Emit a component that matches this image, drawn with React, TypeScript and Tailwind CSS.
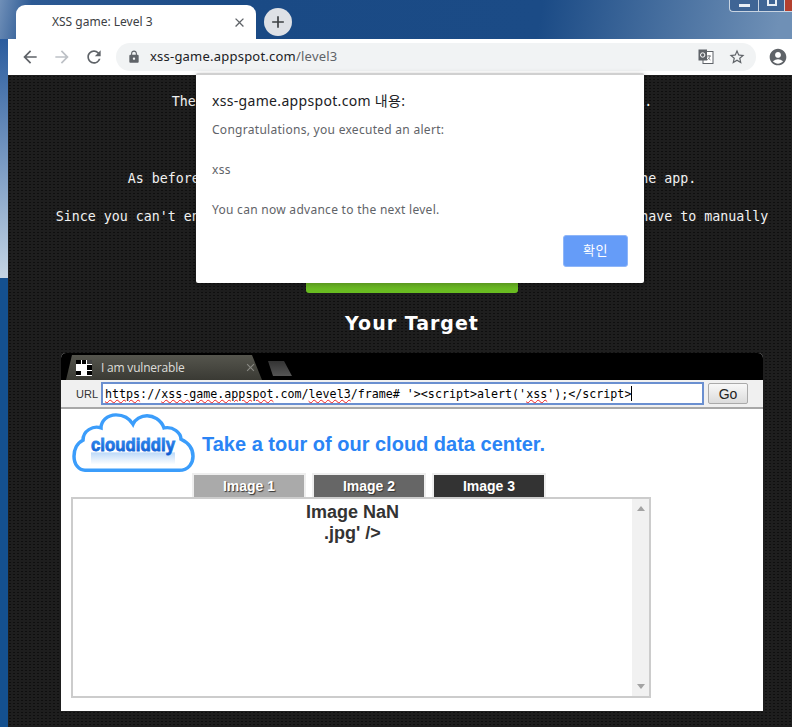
import { MdAccountCircle, MdAdd, MdArrowBack, MdArrowForward, MdClose, MdLock, MdRefresh, MdStarBorder } from "react-icons/md";

const uiFont = "font-['Noto_Sans','Noto_Sans_CJK_KR',sans-serif]";
const monoFont = "font-['DejaVu_Sans_Mono',monospace]";
const arial = "font-['Liberation_Sans',Arial,sans-serif]";

function Squiggle({ children }: { children: string }) {
  return <span className="underline decoration-wavy decoration-[#f02020] decoration-1 underline-offset-1">{children}</span>;
}

function WindowControls() {
  return (
    <div className="ml-auto flex h-[12px] self-start overflow-hidden rounded-bl-[4px] border-b border-l border-[#c8d4e2] bg-[#3f6595]">
      <div className="flex w-[29px] items-center justify-center border-r border-[#c8d4e2]">
        <div className="h-[3px] w-[11px] bg-[#e8eef5]" />
      </div>
      <div className="flex w-[26px] items-start justify-center border-r border-[#c8d4e2]">
        <div className="h-[6px] w-[10px] border-2 border-t-0 border-[#e8eef5]" />
      </div>
      <div className="w-[7px] bg-[#b3402f]" />
    </div>
  );
}

function TranslateIcon() {
  return (
    <svg width="16" height="16" viewBox="0 0 16 16">
      <rect x="5" y="2.500" width="10" height="12" fill="#fff" stroke="#5f6368" />
      <path d="M9 7h4M11 6v1M12 7c-.5 2-1.500 3-3 4M10 8.500c.5 1 1.500 2 2.500 2.500" stroke="#5f6368" fill="none" strokeWidth="0.8" />
      <rect x="0.500" y="0.500" width="8.500" height="11" fill="#5f6368" />
      <circle cx="4.700" cy="6" r="2.200" fill="none" stroke="#fff" strokeWidth="1" />
    </svg>
  );
}

function CloudLogo() {
  return (
    <svg width="124" height="62" viewBox="0 0 124 66" preserveAspectRatio="none" className="shrink-0">
      <defs>
        <linearGradient id="logoText" x1="0" y1="0" x2="0" y2="1">
          <stop offset="0" stopColor="#3d97f5" />
          <stop offset="1" stopColor="#0b58d0" />
        </linearGradient>
        <linearGradient id="logoGlow" x1="0" y1="0" x2="0" y2="1">
          <stop offset="0" stopColor="#bcd9f8" />
          <stop offset="1" stopColor="#ffffff" />
        </linearGradient>
      </defs>
      <path
        d="M14 62H108C118 62 122 54 122 47C122 38 116 32 110 29C110 22 102 15 93 17C90 8 82 4 76 4C70 4 64 8 62 13C58 6 52 3 45 3C36 3 30 10 30 17C22 14 12 20 12 30C6 33 3 40 3 47C3 56 8 62 14 62Z"
        fill="#fff"
        stroke="#3b9dfb"
        strokeWidth="3.500"
      />
      <rect x="20" y="43" width="84" height="13" fill="url(#logoGlow)" />
      <text
        x="62"
        y="42"
        textAnchor="middle"
        textLength="84"
        lengthAdjust="spacingAndGlyphs"
        fontFamily="Liberation Sans"
        fontWeight="700"
        fontSize="20"
        fill="url(#logoText)"
        stroke="url(#logoText)"
        strokeWidth="0.900"
      >
        cloudiddly
      </text>
    </svg>
  );
}

function FrameTab() {
  return (
    <div className="flex items-end bg-black pl-[5px] pt-[2px]">
      <div className="flex h-[25px] w-[198px] items-center bg-[linear-gradient(#55554d,#3a3a34)] pl-[10px] pr-[3px] [clip-path:polygon(0_100%,6px_0,186px_0,196px_100%)]">
        <div className="grid h-[16px] w-[16px] grid-cols-3 grid-rows-3 gap-px bg-white">
          <div className="bg-black" />
          <div className="bg-black" />
          <div className="bg-[#444]" />
          <div className="bg-white" />
          <div className="bg-white" />
          <div className="bg-black" />
          <div className="bg-black" />
          <div className="bg-white" />
          <div className="bg-black" />
        </div>
        <span className="ml-[9px] font-['Open_Sans',sans-serif] text-[12px] tracking-[-0.2px] text-[#dededa]">I am vulnerable</span>
        <MdClose className="ml-auto mr-[4px] text-[#8a8a84]" size={13} />
      </div>
      <div className="mb-[4px] ml-[4px] h-[15px] w-[24px] bg-[linear-gradient(#333,#555)] [clip-path:polygon(0_0,16px_0,24px_100%,5px_100%)]" />
    </div>
  );
}

function ImageTab({ label, color }: { label: string; color: string }) {
  return (
    <div className="border-2 border-b-0 border-[#eeeeee]">
      <div className={`${color} flex h-[22px] w-[110px] items-center justify-center text-[14px] font-bold text-white [text-shadow:1px_1px_1px_#333]`}>
        {label}
      </div>
    </div>
  );
}

export default function App() {
  return (
    <div className="relative flex h-[727px] w-[792px] flex-col overflow-hidden bg-[#1a1a1a]">
      {/* browser title strip */}
      <div className="flex h-[39px] shrink-0 bg-[linear-gradient(100deg,#6f8fb8_0%,#2d5a94_4%,#1a4a85_30%,#1b4b86_68%,#6f90b6_98%)] pl-[16px]">
        <div className="mt-[5px] flex h-[34px] w-[240px] items-center rounded-t-[9px] bg-white pl-[36px] pr-[9px]">
          <span className={`${uiFont} text-[12px] text-[#3c4043]`}>XSS game: Level 3</span>
          <MdClose className="ml-auto text-[#5f6368]" size={15} />
        </div>
        <div className="ml-[8px] mt-[8px] flex h-[28px] w-[28px] items-center justify-center rounded-full bg-[#dee1e6]">
          <MdAdd className="text-[#3c4043]" size={20} />
        </div>
        <WindowControls />
      </div>

      <div className="flex min-h-0 flex-1">
        <div className="w-[8px] shrink-0 bg-[linear-gradient(#2a5c9e_0%,#c4d4e4_34.700%,#14508f_34.700%,#14508f_100%)]" />

        <div className="flex min-w-0 flex-1 flex-col">
          {/* toolbar */}
          <div className="flex h-[36px] shrink-0 items-center bg-white pl-[12px] pr-[4px]">
            <MdArrowBack className="text-[#5f6368]" size={20} />
            <MdArrowForward className="ml-[12px] text-[#bdc1c6]" size={20} />
            <MdRefresh className="ml-[12px] text-[#5f6368]" size={20} />
            <div className="ml-[12px] flex h-[28px] w-[640px] items-center rounded-full bg-[#f1f3f4] pl-[11px] pr-[10px]">
              <MdLock className="text-[#5f6368]" size={14} />
              <span className={`${uiFont} ml-[9px] text-[13px] tracking-[0.22px] text-[#202124]`}>
                xss-game.appspot.com<span className="text-[#5f6368]">/level3</span>
              </span>
              <div className="ml-auto flex items-center gap-[14px]">
                <TranslateIcon />
                <MdStarBorder className="text-[#5f6368]" size={18} />
              </div>
            </div>
            <MdAccountCircle className="ml-[12px] text-[#5f6368]" size={20} />
          </div>

          {/* page */}
          <div className="min-h-0 flex-1 bg-[#1e1e1e] bg-[radial-gradient(#0f0f0f_1px,transparent_1px)] bg-[length:4px_3px] pl-[32px]">
            <div className={`${monoFont} flex w-[744px] flex-col items-center pt-[17px] text-[13.300px] leading-[20px] text-[#f2f2f2]`}>
              <p className="whitespace-nowrap">The application on this level is using one such hidden sink.</p>
              <p className="mt-[17px] text-[16px] font-bold leading-[24px]">Mission Objective</p>
              <p className="mt-[16px] whitespace-nowrap">As before, inject a script to pop up a JavaScript alert() into the app.</p>
              <p className="mt-[18px] whitespace-nowrap">Since you can't enter your payload anywhere in the application, you will have to manually</p>
              <div className="mt-[38px] flex h-[28px] w-[212px] justify-center rounded-b-[3px] bg-[linear-gradient(#8ad236,#68bc20)] pt-[1px] text-[#1b3a06]">
                Target code (toggle)
              </div>
              <h2 className="mt-[18px] font-['DejaVu_Sans',sans-serif] text-[19px] font-bold leading-[24px] tracking-[1px] text-white">Your Target</h2>

              {/* vulnerable frame */}
              <div className={`${arial} mt-[18px] w-[702px] overflow-hidden rounded-t-[5px] bg-white`}>
                <FrameTab />
                <div className="flex h-[29px] items-center border-b-2 border-[#a8a8a8] bg-[#f0f0f0] pl-[15px]">
                  <span className="text-[11px] text-[#333]">URL</span>
                  <div className={`${monoFont} ml-[3px] flex h-[23px] w-[603px] items-center whitespace-pre border-2 border-[#6a8fd0] bg-white pl-[2px] text-[11.670px] text-black`}>
                    <Squiggle>https</Squiggle>://<Squiggle>xss-game.appspot</Squiggle>.com/<Squiggle>level3</Squiggle>/frame# '&gt;&lt;script&gt;alert('<Squiggle>xss</Squiggle>');&lt;/script&gt;
                    <span className="h-[15px] w-px bg-black" />
                  </div>
                  <div className="ml-[4px] flex h-[21px] w-[40px] items-center justify-center rounded-[2px] border border-[#aaa] bg-[linear-gradient(#f8f8f8,#dcdcdc)] text-[14px] text-[#222]">
                    Go
                  </div>
                </div>

                <div className="flex h-[64px] items-start pl-[10px] pt-[3px]">
                  <CloudLogo />
                  <span className="ml-[7px] mt-[20px] text-[20px] font-bold leading-[24px] text-[#2a84f5]">Take a tour of our cloud data center.</span>
                </div>

                <div className="flex gap-[6px] pl-[131px]">
                  <ImageTab label="Image 1" color="bg-[#aaaaaa]" />
                  <ImageTab label="Image 2" color="bg-[#666666]" />
                  <ImageTab label="Image 3" color="bg-[#333333]" />
                </div>
                <div className="ml-[10px] flex h-[201px] w-[580px] border-2 border-[#cccccc] bg-white">
                  <div className="flex-1 pt-[3px] text-center text-[18px] font-bold leading-[21px] text-[#333]">
                    <p>Image NaN</p>
                    <p>.jpg' /&gt;</p>
                  </div>
                  <div className="flex w-[17px] flex-col items-center justify-between bg-[#f1f1f1] py-[7px] text-[#a3a3a3]">
                    <div className="h-0 w-0 border-x-[4px] border-b-[5px] border-x-transparent border-b-[#a3a3a3]" />
                    <div className="h-0 w-0 border-x-[4px] border-t-[5px] border-x-transparent border-t-[#a3a3a3]" />
                  </div>
                </div>
                <div className="h-[13px]" />
              </div>
            </div>
          </div>
        </div>
      </div>

      {/* alert dialog */}
      <div className={`${uiFont} absolute left-[196px] top-[73px] h-[210px] w-[448px] rounded-[2px] border-t-2 border-[#d0d0d0] bg-white pl-[16px] pr-[16px] pt-[16px] shadow-[0_2px_6px_rgba(0,0,0,0.3)]`}>
        <p className="text-[14px] leading-[20px] tracking-[0.32px] text-[#202124]">xss-game.appspot.com 내용:</p>
        <div className="mt-[9px] text-[12px] leading-[20px] tracking-[0.28px] text-[#5f6368]">
          <p>Congratulations, you executed an alert:</p>
          <p className="mt-[20px]">xss</p>
          <p className="mt-[20px]">You can now advance to the next level.</p>
        </div>
        <div className="mt-[15px] flex justify-end">
          <div className="flex h-[32px] w-[65px] items-center justify-center rounded-[3px] border border-[#8fb6f8] bg-[#659cf8] text-[13px] tracking-[0.5px] text-white">확인</div>
        </div>
      </div>
    </div>
  );
}
